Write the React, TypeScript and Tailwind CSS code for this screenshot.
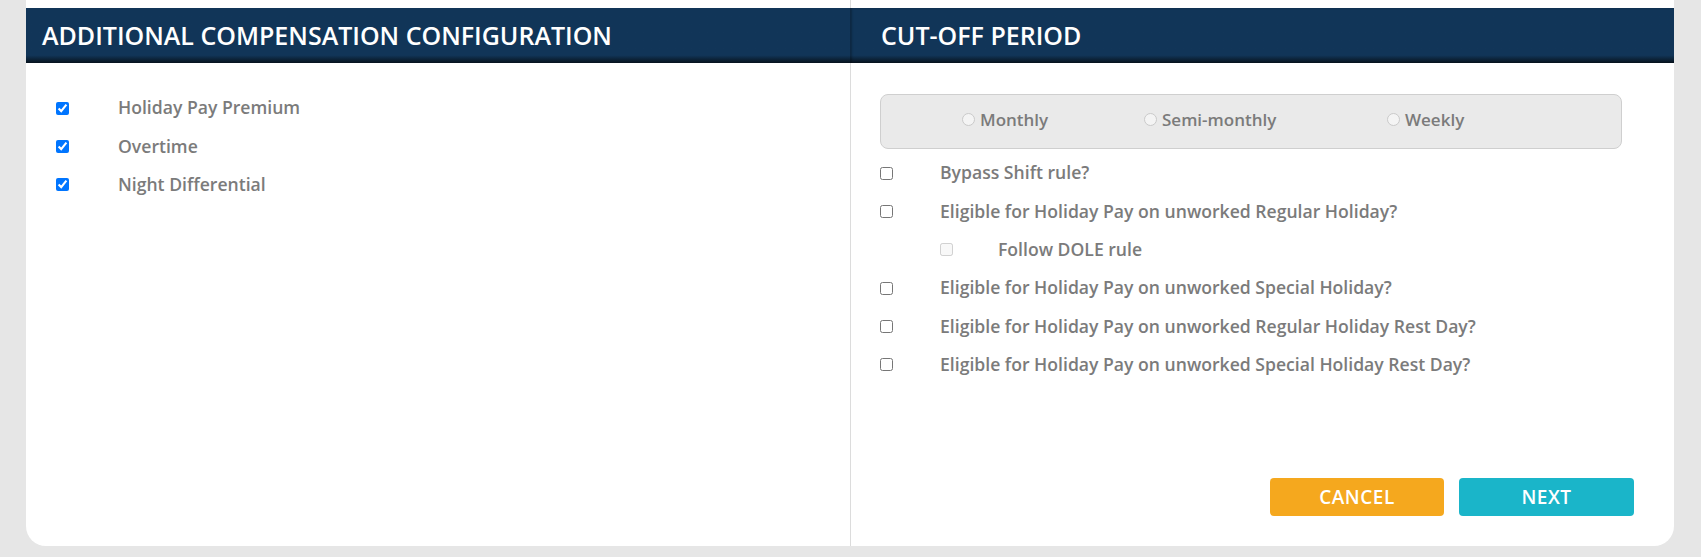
import React from "react";

const font = { fontFamily: '"Open Sans", "Liberation Sans", sans-serif' };

function SectionHeader({ title, className }: { title: string; className?: string }) {
    return (
        <div className={`h-[55px] flex items-center bg-linear-to-b from-[#113558] from-[86%] to-[#07131e] ${className ?? ''}`}>
            <span className="text-white font-semibold text-[25px] leading-none">{title}</span>
        </div>
    );
}

function CheckRow({ label, checked, disabled, gap = 'ml-[47px]', className }: { label: string; checked?: boolean; disabled?: boolean; gap?: string; className?: string }) {
    return (
        <label className={`h-[38.3px] flex items-center ${className ?? ''}`}>
            <input type="checkbox" defaultChecked={checked} disabled={disabled} className="w-[13px] h-[13px] shrink-0" />
            <span className={`${gap} text-[17.6px] font-semibold text-[#7b7b7b] leading-none`}>{label}</span>
        </label>
    );
}

function Radio({ label, className }: { label: string; className?: string }) {
    return (
        <div className={`flex items-center ${className ?? ''}`}>
            <span className="w-[13px] h-[13px] rounded-full border border-[#cacaca] bg-[#f4f4f4] shrink-0" />
            <span className="ml-[5px] text-[17px] font-semibold text-[#7b7b7b] leading-none">{label}</span>
        </div>
    );
}

export default function App() {
    return (
        <div style={font} className="w-[1701px] h-[557px] bg-[#e6e6e6] pl-[26px] pr-[27px] pb-[11px] flex">
            <div className="flex-1 bg-white rounded-b-[20px] flex overflow-hidden">
                {/* left column */}
                <div className="w-[824px] pt-[8px] flex flex-col">
                    <SectionHeader title="ADDITIONAL COMPENSATION CONFIGURATION" className="pl-[16px]" />
                    <div className="pt-[26px] pl-[30px]">
                        <CheckRow label="Holiday Pay Premium" checked gap="ml-[49px]" />
                        <CheckRow label="Overtime" checked gap="ml-[49px]" />
                        <CheckRow label="Night Differential" checked gap="ml-[49px]" />
                    </div>
                </div>

                {/* right column */}
                <div className="flex-1 pt-[8px] border-l border-[#dcdcdc] flex flex-col">
                    <SectionHeader title="CUT-OFF PERIOD" className="-ml-px pl-[31px] shadow-[inset_2px_0_2px_rgba(0,0,0,0.25)]" />
                    <div className="flex-1 flex flex-col pt-[31px] px-[29px] pb-[30px]">
                        <div className="w-[742px] h-[55px] rounded-[8px] border border-[#cfcfcf] bg-[#eaeaea] flex items-center pl-[81px] pb-[4px]">
                            <Radio label="Monthly" className="w-[182px]" />
                            <Radio label="Semi-monthly" className="w-[243px]" />
                            <Radio label="Weekly" />
                        </div>
                        <div className="mt-[5px]">
                            <CheckRow label="Bypass Shift rule?" />
                            <CheckRow label="Eligible for Holiday Pay on unworked Regular Holiday?" />
                            <CheckRow label="Follow DOLE rule" disabled gap="ml-[45px]" className="pl-[60px]" />
                            <CheckRow label="Eligible for Holiday Pay on unworked Special Holiday?" />
                            <CheckRow label="Eligible for Holiday Pay on unworked Regular Holiday Rest Day?" />
                            <CheckRow label="Eligible for Holiday Pay on unworked Special Holiday Rest Day?" />
                        </div>
                        <div className="mt-auto flex justify-end gap-[15px] pr-[11px]">
                            <button className="w-[174px] h-[38px] rounded-[4px] bg-[#f5a81e] text-white text-[19px] font-semibold tracking-[0.5px]">
                                CANCEL
                            </button>
                            <button className="w-[175px] h-[38px] rounded-[4px] bg-[#1ab5c9] text-white text-[19px] font-semibold tracking-[0.5px]">
                                NEXT
                            </button>
                        </div>
                    </div>
                </div>
            </div>
        </div>
    );
}
